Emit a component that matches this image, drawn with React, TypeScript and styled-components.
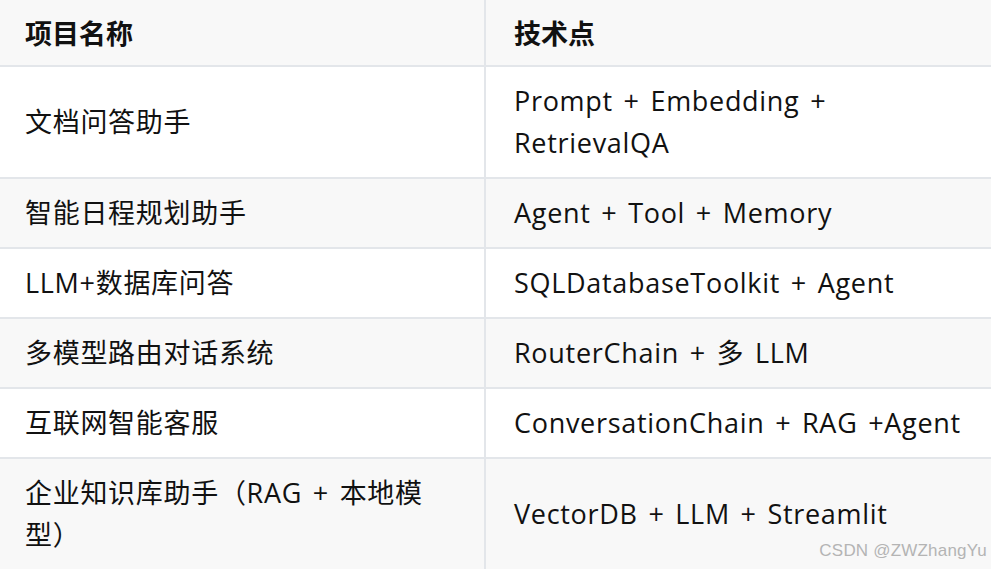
import React from "react";
import styled, { createGlobalStyle } from "styled-components";

interface Item {
  name: string;
  tech: string;
}

const items: Item[] = [
  { name: "文档问答助手", tech: "Prompt + Embedding + RetrievalQA" },
  { name: "智能日程规划助手", tech: "Agent + Tool + Memory" },
  { name: "LLM+数据库问答", tech: "SQLDatabaseToolkit + Agent" },
  { name: "多模型路由对话系统", tech: "RouterChain + 多 LLM" },
  { name: "互联网智能客服", tech: "ConversationChain + RAG +Agent" },
  { name: "企业知识库助手（RAG + 本地模型）", tech: "VectorDB + LLM + Streamlit" },
];

const GlobalStyle = createGlobalStyle`
  html, body {
    margin: 0;
    padding: 0;
    background: #ffffff;
    overflow: hidden;
  }
  body {
    font-family: "Open Sans", "Noto Sans CJK SC", sans-serif;
    color: #111111;
  }
`;

const Page = styled.div`
  position: relative;
  width: 991px;
  height: 569px;
  overflow: hidden;
`;

const Table = styled.div`
  margin-left: -2px;
  width: 993px;
  display: flex;
  flex-direction: column;
`;

const Row = styled.div<{ $shaded: boolean }>`
  display: flex;
  background: ${(p) => (p.$shaded ? "#f8f8f8" : "#ffffff")};
  border-bottom: 2px solid #e3e6ea;
`;

const Cell = styled.div<{ $head?: boolean }>`
  box-sizing: border-box;
  display: flex;
  align-items: center;
  padding: ${(p) => (p.$head ? "11.5px 27px" : "13px 27px")};
  font-size: 27px;
  line-height: 42px;
  font-weight: ${(p) => (p.$head ? 700 : 400)};
  letter-spacing: ${(p) => (p.$head ? "0" : "0.7px")};
  word-spacing: 3px;
  font-family: ${(p) =>
    p.$head ? '"Noto Sans CJK SC", sans-serif' : '"Open Sans", "Noto Sans CJK SC", sans-serif'};
`;

const NameCell = styled(Cell)`
  width: 488px;
  flex: none;
  border-right: 2px solid #e3e6ea;
`;

const TechCell = styled(Cell)`
  flex: 1;
  padding-left: 28px;
`;

const Watermark = styled.div`
  position: absolute;
  right: 4px;
  bottom: 8px;
  font-family: "Liberation Sans", Arial, sans-serif;
  font-size: 17px;
  color: #b4b4b4;
  letter-spacing: 0.2px;
`;

export default function App() {
  return (
    <Page>
      <GlobalStyle />
      <Table>
        <Row $shaded>
          <NameCell $head>项目名称</NameCell>
          <TechCell $head>技术点</TechCell>
        </Row>
        {items.map((item, i) => (
          <Row key={item.name} $shaded={i % 2 === 1}>
            <NameCell>{item.name}</NameCell>
            <TechCell>{item.tech}</TechCell>
          </Row>
        ))}
      </Table>
      <Watermark>CSDN @ZWZhangYu</Watermark>
    </Page>
  );
}
